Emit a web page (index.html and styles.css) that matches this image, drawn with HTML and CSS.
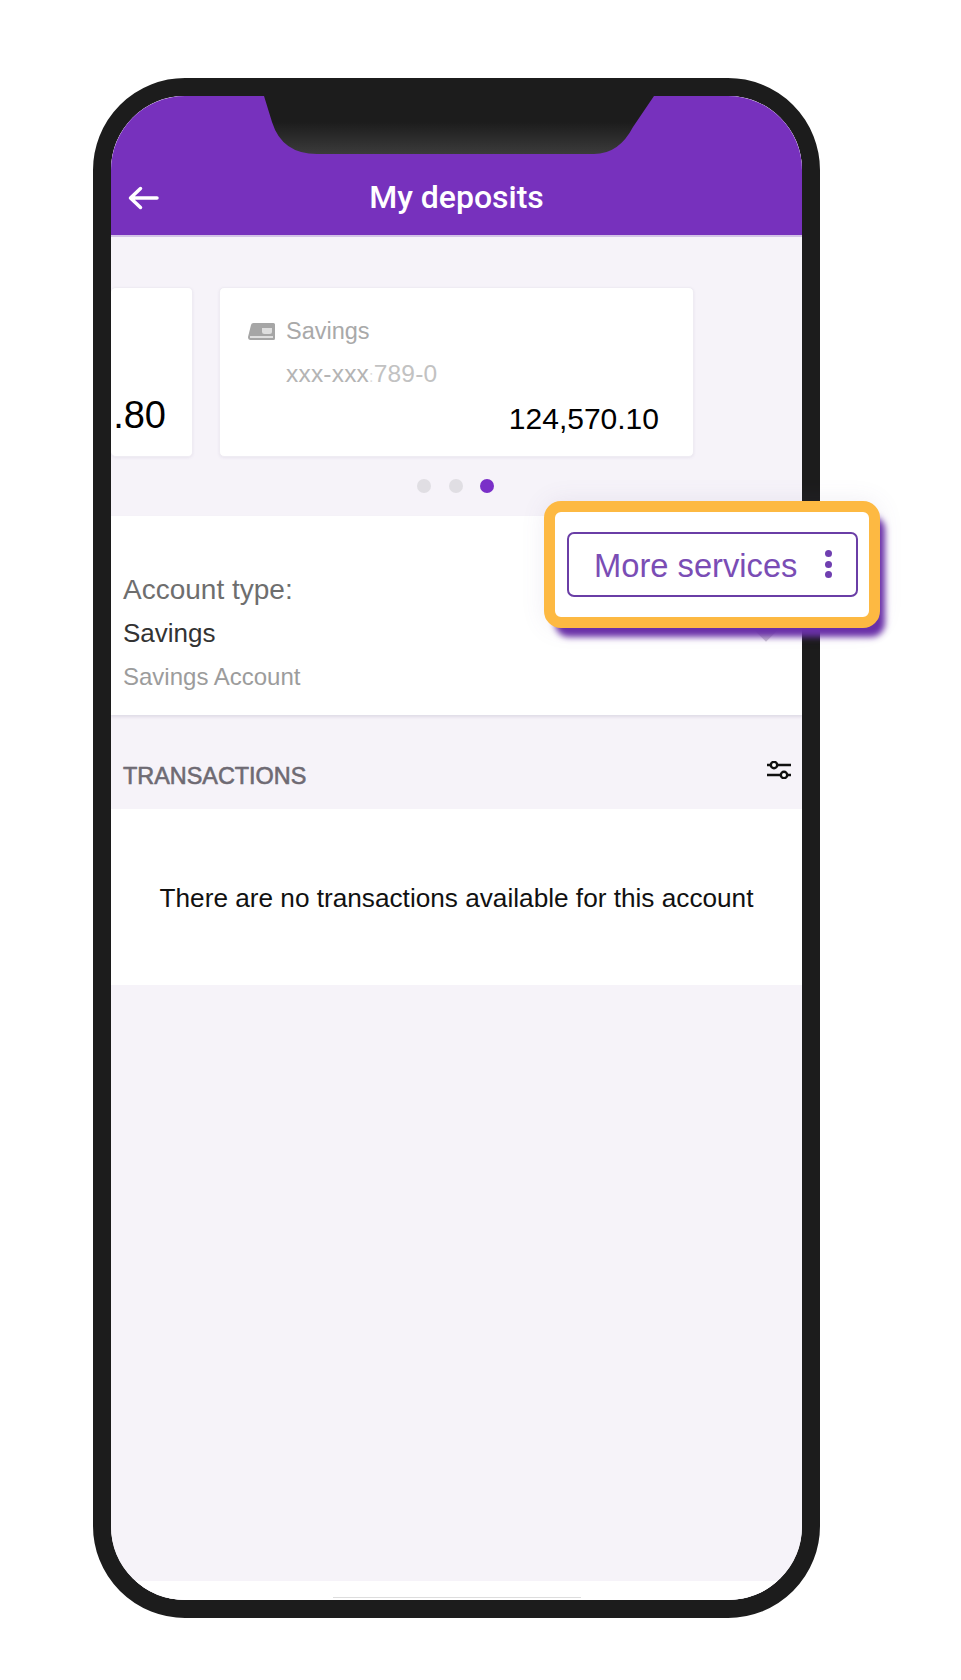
FILE: index.html
```html
<!DOCTYPE html>
<html lang="en">
<head>
    <meta charset="UTF-8">
    <meta name="viewport" content="width=device-width, initial-scale=1.0">
    <title>My deposits</title>
    <link rel="stylesheet" href="styles.css">
</head>
<body>
<div class="phone">
    <div class="screen">
        <header class="topbar">
            <svg class="back" viewBox="0 0 31 24" width="31" height="24">
                <path d="M29 12H3M12.500 2.500L2.500 12L12.500 21.500" fill="none" stroke="#fff" stroke-width="3.500" stroke-linecap="round" stroke-linejoin="round"/>
            </svg>
            <h1>My deposits</h1>
        </header>

        <div class="carousel">
            <div class="card card-prev">
                <div class="amount amount-prev">.80</div>
            </div>
            <div class="card card-current">
                <div class="card-title">
                    <svg class="wallet" viewBox="0 0 29 19" width="29" height="19">
                        <path d="M1 15L4 3Q4.400 1 6.500 1H26.500Q28 1 28 2.500V16.500Q28 18 26.500 18H3.500Q1 18 1 15Z" fill="#a6a6a6"/>
                        <path d="M15 6H25V9.500Q25 12 22.500 12H17.500Q15 12 15 9.500Z" fill="#dedede"/>
                        <path d="M3 15H26" stroke="#f2f2f2" stroke-width="1.500"/>
                    </svg>
                    <span>Savings</span>
                </div>
                <div class="card-number">xxx-xxx<span class="gap">:</span><span class="digits">789-0</span></div>
                <div class="amount">124,570.10</div>
            </div>
        </div>

        <div class="dots">
            <span class="dot"></span>
            <span class="dot"></span>
            <span class="dot active"></span>
        </div>

        <section class="info">
            <div class="info-label">Account type:</div>
            <div class="info-value">Savings</div>
            <div class="info-sub">Savings Account</div>
            <span class="caret"></span>
        </section>

        <div class="section-head">
            <h2>TRANSACTIONS</h2>
            <svg class="filter" viewBox="0 0 26 18" width="26" height="18">
                <g fill="#fff" stroke="#111" stroke-width="2.400">
                    <path d="M1 4H25M1 14H25"/>
                    <circle cx="8" cy="4" r="3.200"/>
                    <circle cx="18" cy="14" r="3.200"/>
                </g>
            </svg>
        </div>

        <div class="empty">There are no transactions available for this account</div>

        <div class="filler"></div>
        <div class="home-bar"><span></span></div>
    </div>

    <svg class="notch" viewBox="0 0 390 58" width="390" height="58">
        <defs>
            <linearGradient id="notchFill" x1="0" y1="0" x2="0" y2="1">
                <stop offset="0.45" stop-color="#1c1c1c"/>
                <stop offset="1" stop-color="#3b3b3b"/>
            </linearGradient>
        </defs>
        <path d="M0 0L8 26Q18 58 53 58H330Q355 58 369 31L390 0Z" fill="url(#notchFill)"/>
    </svg>

    <div class="callout">
        <div class="more-btn">
            <span>More services</span>
            <span class="kebab"><i></i><i></i><i></i></span>
        </div>
    </div>
</div>
</body>
</html>
```

FILE: styles.css
```css
* {
    box-sizing: border-box;
}
body {
    margin: 0;
    background: #fff;
    font-family: "Liberation Sans", Arial, sans-serif;
    height: 1680px;
    overflow: hidden;
}
.phone {
    position: relative;
    width: 727px;
    height: 1540px;
    margin: 78px 0 0 93px;
    border: 18px solid #1c1c1c;
    border-radius: 92px;
    background: #f6f3f9;
}
.screen {
    display: flex;
    flex-direction: column;
    height: 100%;
    border-radius: 74px;
    overflow: hidden;
    background: #f6f3f9;
}
.notch {
    position: absolute;
    top: 0;
    left: 153px;
}

/* header */
.topbar {
    position: relative;
    flex: none;
    display: flex;
    justify-content: center;
    align-items: flex-end;
    height: 141px;
    padding-bottom: 20px;
    background: #7731bd;
    border-bottom: 2px solid #d3c3e6;
}
.topbar h1 {
    margin: 0;
    color: #fff;
    font-size: 32px;
    line-height: 36px;
    font-weight: 500;
    font-family: Roboto, "Liberation Sans", sans-serif;
}
.back {
    position: absolute;
    left: 17px;
    bottom: 25px;
}

/* account cards */
.carousel {
    flex: none;
    display: flex;
    gap: 26px;
    height: 170px;
    margin: 50px 108px 0 0;
}
.card {
    background: #fff;
    border: 1px solid #efecf3;
    border-radius: 5px;
    box-shadow: 0 1px 3px rgba(80, 60, 110, 0.08);
}
.card-prev {
    flex: 1;
    display: flex;
    justify-content: flex-end;
    border-left: 0;
    padding: 107px 26px 0 0;
}
.card-current {
    flex: none;
    width: 475px;
    padding: 29px 34px 0 27px;
}
.card-title {
    display: flex;
    align-items: center;
    gap: 10px;
    height: 28px;
    color: #a9a9a9;
    font-size: 23.500px;
}
.card-number {
    margin: 15px 0 0 39px;
    color: #b4b4b4;
    font-size: 24.500px;
    line-height: 28px;
    letter-spacing: 0.2px;
}
.gap {
    color: #ddd;
    font-size: 16px;
}
.digits {
    color: #c2c2c2;
}
.amount {
    margin-top: 11px;
    color: #000;
    font-size: 30px;
    line-height: 34px;
    text-align: right;
}
.amount-prev {
    margin: 0;
    font-size: 38px;
    line-height: 40px;
}

.dots {
    flex: none;
    display: flex;
    justify-content: center;
    gap: 17.500px;
    height: 59px;
    padding: 22px 2px 0 0;
}
.dot {
    width: 14px;
    height: 14px;
    border-radius: 50%;
    background: #e0dee3;
}
.dot.active {
    background: #7a2fc8;
}

/* account info */
.info {
    position: relative;
    flex: none;
    height: 199px;
    padding: 58px 0 0 12px;
    background: #fff;
    box-shadow: 0 2px 3px rgba(60, 40, 90, 0.12);
}
.info-label {
    color: #6e6e6e;
    font-size: 28px;
    line-height: 32px;
}
.info-value {
    margin-top: 11px;
    color: #333;
    font-size: 26px;
    line-height: 32px;
}
.info-sub {
    margin-top: 13px;
    color: #9c9c9c;
    font-size: 24px;
    line-height: 30px;
}
.caret {
    position: absolute;
    top: 104px;
    left: 646px;
    width: 18px;
    height: 18px;
    background: #cfcbd3;
    transform: rotate(45deg);
}

/* transactions */
.section-head {
    flex: none;
    display: flex;
    justify-content: space-between;
    align-items: flex-start;
    height: 94px;
    padding: 47px 10px 0 12px;
}
.section-head h2 {
    margin: 0;
    color: #6e6a73;
    font-size: 23.400px;
    line-height: 28px;
    font-weight: normal;
    -webkit-text-stroke: 0.6px #6e6a73;
}
.filter {
    margin-top: -1px;
}
.empty {
    flex: none;
    height: 176px;
    padding-top: 73px;
    background: #fff;
    color: #111;
    font-size: 26.200px;
    line-height: 32px;
    text-align: center;
}
.filler {
    flex: 1;
}
.home-bar {
    flex: none;
    display: flex;
    justify-content: center;
    align-items: flex-end;
    height: 19px;
    padding-bottom: 2px;
    background: #fff;
}
.home-bar span {
    width: 248px;
    height: 1px;
    background: #ddd;
}

/* highlighted button over the phone */
.callout {
    position: absolute;
    top: 405px;
    left: 433px;
    width: 336px;
    height: 127px;
    padding: 20px 11px 0 12px;
    background: #fff;
    border: 11px solid #fdb942;
    border-radius: 17px;
    box-shadow: 8px 12px 6px -3px #6a30a8, 0 0 24px rgba(110, 90, 150, 0.1);
}
.more-btn {
    display: flex;
    justify-content: space-between;
    align-items: center;
    height: 65px;
    padding: 2px 24px 0 25px;
    border: 2px solid #6a3ea6;
    border-radius: 7px;
    color: #7a4db5;
    font-size: 32.700px;
}
.kebab {
    display: flex;
    flex-direction: column;
    gap: 3.500px;
    margin-top: -3px;
}
.kebab i {
    width: 7px;
    height: 7px;
    border-radius: 50%;
    background: #6f3fb0;
}
```
